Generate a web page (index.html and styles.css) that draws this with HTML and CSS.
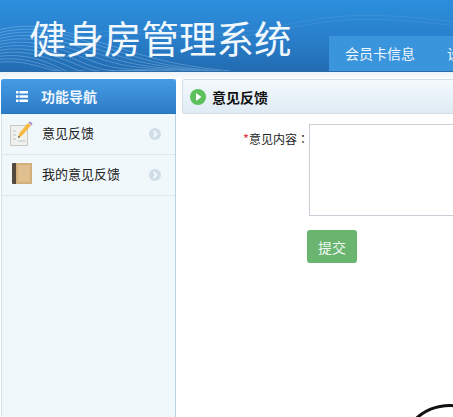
FILE: index.html
```html
<!DOCTYPE html>
<html lang="zh-CN">
<head>
<meta charset="utf-8">
<title>健身房管理系统</title>
<link rel="stylesheet" href="styles.css">
</head>
<body>
<header class="top">
  <svg class="waves" viewBox="0 0 453 72" preserveAspectRatio="none" aria-hidden="true">
    <g fill="none" stroke="#a5d2f3" stroke-width="0.6" opacity="0.6">
      <path d="M0 30C40 20 70 34 110 46S170 66 230 72"/>
      <path d="M0 33C40 23 70 37 108 49S165 68 220 72"/>
      <path d="M0 36C40 26 68 40 104 52S160 68 210 72"/>
      <path d="M0 39C36 30 66 43 100 55S150 68 200 72"/>
      <path d="M0 42C34 34 62 46 96 58S140 68 190 72"/>
      <path d="M0 45C32 38 60 49 90 61S130 69 175 72"/>
      <path d="M0 48C30 42 56 52 84 64S120 70 160 72"/>
      <path d="M0 51C28 46 52 55 78 66S110 71 145 72"/>
      <path d="M0 54C26 50 48 58 70 68S100 71 130 72"/>
      <path d="M0 57C24 54 44 61 62 70S90 72 115 72"/>
      <path d="M0 60C22 58 40 64 55 70S80 72 100 72"/>
      <path d="M0 63C20 61 34 66 48 70S70 72 85 72"/>
    </g>
    <g fill="none" stroke="#a5d2f3" stroke-width="0.5" opacity="0.25">
      <path d="M90 34C150 24 200 40 260 30S340 8 453 22"/>
      <path d="M90 38C150 28 200 44 260 34S340 12 453 26"/>
    </g>
  </svg>
  <h1 class="brand">健身房管理系统</h1>
  <nav class="tabs">
    <a class="tab">会员卡信息</a>
    <a class="tab">设置</a>
  </nav>
</header>
<div class="main">
  <aside class="side">
    <div class="side-head">
      <svg class="list-icon" viewBox="0 0 12 11" aria-hidden="true">
        <path fill="#fff" d="M0 0h2.500v2.500H0zM3.500 0H12v2.500H3.500zM0 4.250h2.500v2.500H0zM3.500 4.250H12v2.500H3.500zM0 8.500h2.500V11H0zM3.500 8.500H12V11H3.500z"/>
      </svg>
      <span>功能导航</span>
    </div>
    <a class="side-item">
      <svg class="item-icon" viewBox="0 0 24 26" aria-hidden="true">
        <path fill="#f0f0ec" stroke="#c8c8c4" d="M1.500 4.500h17v20h-17z"/>
        <path stroke="#b9c6cf" d="M4 10h3M4 14h3M4 18h3M9 20h7"/>
        <path fill="#f5b942" d="M9 17l1.500-5L19 2l3 2.500-9 10z"/>
        <path fill="#a58ad0" d="M19.500 1.500l1.500-1 2.500 2-1 2z"/>
        <path fill="#555" d="M9 17l.7-2.300 1.600 1.300z"/>
      </svg>
      <span class="item-label">意见反馈</span>
      <svg class="chev" viewBox="0 0 12 12" aria-hidden="true">
        <circle cx="6" cy="6" r="6" fill="#cfdde8"/>
        <path fill="none" stroke="#f2f7fb" stroke-width="2" d="M4.500 3l3 3-3 3"/>
      </svg>
    </a>
    <a class="side-item">
      <svg class="item-icon" viewBox="0 0 24 26" aria-hidden="true">
        <rect x="3" y="1" width="5" height="21" rx="1" fill="#54473b"/>
        <rect x="7" y="1" width="16" height="21" fill="#d4ae78"/>
        <rect x="9" y="3" width="12" height="17" fill="#dfc08e"/>
      </svg>
      <span class="item-label">我的意见反馈</span>
      <svg class="chev" viewBox="0 0 12 12" aria-hidden="true">
        <circle cx="6" cy="6" r="6" fill="#cfdde8"/>
        <path fill="none" stroke="#f2f7fb" stroke-width="2" d="M4.500 3l3 3-3 3"/>
      </svg>
    </a>
  </aside>
  <section class="content">
    <div class="content-head">
      <svg class="play" viewBox="0 0 16 16" aria-hidden="true">
        <circle cx="8" cy="8" r="8" fill="#5cc05c"/>
        <path fill="#fff" d="M6 4l5.500 4L6 12z"/>
      </svg>
      <span>意见反馈</span>
    </div>
    <form class="form">
      <div class="field">
        <label class="field-label"><span class="req">*</span>意见内容<span class="colon" lang="zh-TW">：</span></label>
        <textarea class="area"></textarea>
      </div>
      <button class="submit" type="button">提交</button>
    </form>
  </section>
</div>
<div class="ring"></div>
</body>
</html>
```

FILE: styles.css
```css
html, body {
  margin: 0;
  padding: 0;
  height: 100%;
  overflow: hidden;
  background: #fff;
  font-family: "Noto Sans CJK SC", "Liberation Sans", sans-serif;
}
.top {
  position: relative;
  height: 72px;
  background: linear-gradient(#2b8fdc 0%, #2a80cc 50%, #226cb2 100%);
  display: flex;
  justify-content: space-between;
  align-items: flex-end;
  overflow: hidden;
  border-bottom: 1px solid #2b6ca8;
  box-sizing: border-box;
}
.waves {
  position: absolute;
  inset: 0;
  width: 100%;
  height: 100%;
}
.brand {
  position: relative;
  margin: 0 0 10px 29px;
  font-size: 37.500px;
  line-height: 48px;
  font-weight: 400;
  color: #f0f8fe;
  white-space: nowrap;
}
.tabs {
  position: relative;
  display: flex;
  flex: none;
  width: 124px;
  height: 35px;
  background: #3a95dc;
  overflow: hidden;
}
.tab {
  flex: none;
  padding: 0 16px;
  line-height: 35px;
  font-size: 14px;
  color: #f2f8fd;
  white-space: nowrap;
}
.main {
  display: flex;
  align-items: stretch;
  gap: 6px;
  padding: 7px 0 0 1px;
  height: 338px;
  background: linear-gradient(#eaf3fa 0, #fff 8px);
}
.side {
  flex: none;
  width: 175px;
  box-sizing: border-box;
  background: #f1f8fc;
  border-right: 1px solid #b9d3e2;
  border-left: 1px solid #d3e3ee;
}
.side-head {
  display: flex;
  align-items: center;
  height: 35px;
  margin: 0 -1px;
  padding-left: 15px;
  background: linear-gradient(#459be4, #2d7cc8);
  border-radius: 3px 3px 0 0;
  border-bottom: 1px solid #2a76bd;
  box-sizing: border-box;
  color: #eef6fd;
  font-size: 14px;
  font-weight: 700;
}
.list-icon {
  width: 12px;
  height: 11px;
  margin-right: 13px;
}
.side-item {
  display: flex;
  align-items: center;
  height: 41px;
  box-sizing: border-box;
  padding: 0 14px 0 7px;
  border-bottom: 1px solid #dde9f1;
  font-size: 13px;
  color: #222;
}
.item-icon {
  flex: none;
  width: 24px;
  height: 26px;
  margin-right: 9px;
}
.item-label {
  flex: 1;
  padding-bottom: 4px;
}
.chev {
  flex: none;
  width: 12px;
  height: 12px;
}
.content {
  flex: 1;
  min-width: 0;
}
.content-head {
  display: flex;
  align-items: center;
  height: 35px;
  box-sizing: border-box;
  padding-left: 7px;
  background: linear-gradient(#f4f9fd, #dfebf4);
  border: 1px solid #d3dfe8;
  border-right: 0;
  border-radius: 3px 0 0 3px;
  font-size: 14px;
  font-weight: 700;
  color: #111;
}
.play {
  width: 16px;
  height: 16px;
  margin-right: 6px;
}
.form {
  padding-top: 10px;
  padding-left: 127px;
}
.field {
  display: flex;
  align-items: flex-start;
}
.field-label {
  flex: none;
  width: 127px;
  margin-left: -127px;
  padding-top: 6px;
  box-sizing: border-box;
  text-align: right;
  font-size: 12px;
  line-height: 18px;
  color: #222;
}
.colon {
  font-family: "Noto Sans CJK TC", sans-serif;
}
.req {
  color: #e0343a;
  font-size: 13px;
}
.area {
  display: block;
  flex: none;
  width: 200px;
  height: 92px;
  margin: 0;
  padding: 0;
  box-sizing: border-box;
  background: #fff;
  border: 1px solid #c9cfd6;
  border-radius: 0;
  outline: 0;
  resize: none;
}
.submit {
  display: block;
  width: 50px;
  height: 33px;
  margin: 14px 0 0 -2px;
  padding: 0;
  border: 0;
  border-radius: 3px;
  background: #69b56f;
  color: #f0f8f0;
  font-family: inherit;
  font-size: 14px;
}
.ring {
  position: absolute;
  left: 398px;
  top: 404px;
  width: 104px;
  height: 104px;
  box-sizing: border-box;
  border: 3px solid #111;
  border-radius: 50%;
}
```
